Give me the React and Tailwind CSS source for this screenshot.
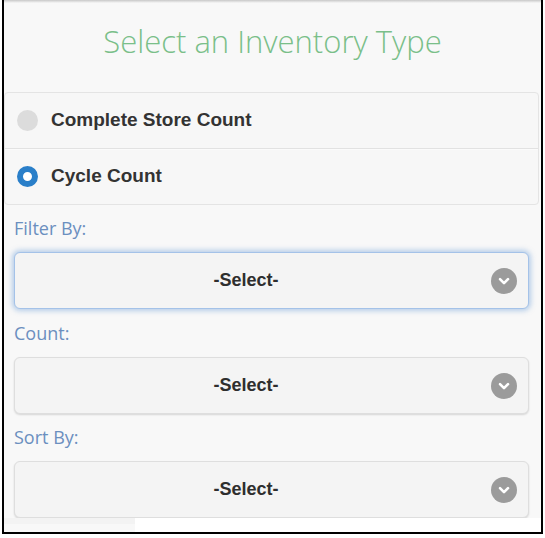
import React from "react";

function Chevron() {
  return (
    <div className="w-[26px] h-[26px] rounded-full bg-[#9b9b9b] flex items-center justify-center shrink-0">
      <svg width="14" height="14" viewBox="0 0 14 14">
        <path d="M3 5.2 L7 9.2 L11 5.2" fill="none" stroke="#ffffff" strokeWidth="2.6" strokeLinecap="round" strokeLinejoin="round" />
      </svg>
    </div>
  );
}

function SelectBox({ focused }) {
  return (
    <div
      className={
        focused
          ? "h-[57px] ml-[10px] mr-[12px] rounded-[6px] border border-[#a4c2e8] bg-[#f4f4f4] shadow-[0_0_5px_2px_rgba(120,165,220,0.5)] flex items-center pl-[8px] pr-[11px]"
          : "h-[57px] ml-[10px] mr-[12px] rounded-[6px] border border-[#dedede] bg-[#f4f4f4] shadow-[0_1px_2px_rgba(0,0,0,0.14)] flex items-center pl-[8px] pr-[11px]"
      }
    >
      <div className="flex-1 text-center pr-[22px] text-[18px] font-bold text-[#2e2e2e] font-['Liberation_Sans',Arial,sans-serif]">
        -Select-
      </div>
      <Chevron />
    </div>
  );
}

function Label({ children, h }) {
  return (
    <div className={`${h} flex items-center pl-[10px] text-[18px] text-[#6b8fbf] font-['Open_Sans',sans-serif]`}>
      {children}
    </div>
  );
}

export default function App() {
  return (
    <div className="w-[545px] h-[538px] bg-white">
      <div className="ml-[2px] w-[541px] h-[534px] border-x-2 border-b-2 border-black bg-[#f8f8f8] flex flex-col">
        <div className="h-[3px] bg-gradient-to-b from-[#c8c8c8] to-[#f8f8f8]" />
        <div className="h-[89px] flex items-center justify-center pb-[12px] text-[31px] font-light text-[#7abf89] font-['Open_Sans',sans-serif]">
          Select an Inventory Type
        </div>
        <div className="mr-[2px] rounded-[4px] border border-[#e4e4e4] bg-[#f7f7f7] flex flex-col">
          <div className="h-[56px] flex items-center gap-[13px] pl-[12px] border-b border-[#e2e2e2] shadow-[0_1px_0_#fbfbfb]">
            <div className="w-[21px] h-[21px] rounded-full bg-[#dcdcdc]" />
            <span className="text-[19px] font-bold text-[#333333] font-['Liberation_Sans',Arial,sans-serif]">
              Complete Store Count
            </span>
          </div>
          <div className="h-[55px] flex items-center gap-[13px] pl-[12px]">
            <div className="w-[21px] h-[21px] rounded-full border-[6px] border-[#2a7fc9] bg-white" />
            <span className="text-[19px] font-bold text-[#333333] font-['Liberation_Sans',Arial,sans-serif]">
              Cycle Count
            </span>
          </div>
        </div>
        <Label h="h-[47px]">Filter By:</Label>
        <SelectBox focused />
        <Label h="h-[48px]">Count:</Label>
        <SelectBox />
        <Label h="h-[47px]">Sort By:</Label>
        <SelectBox />
        <div className="flex-1 flex">
          <div className="w-[131px] h-[6px] bg-[#f3f3f3]" />
          <div className="flex-1 bg-white" />
        </div>
      </div>
    </div>
  );
}
